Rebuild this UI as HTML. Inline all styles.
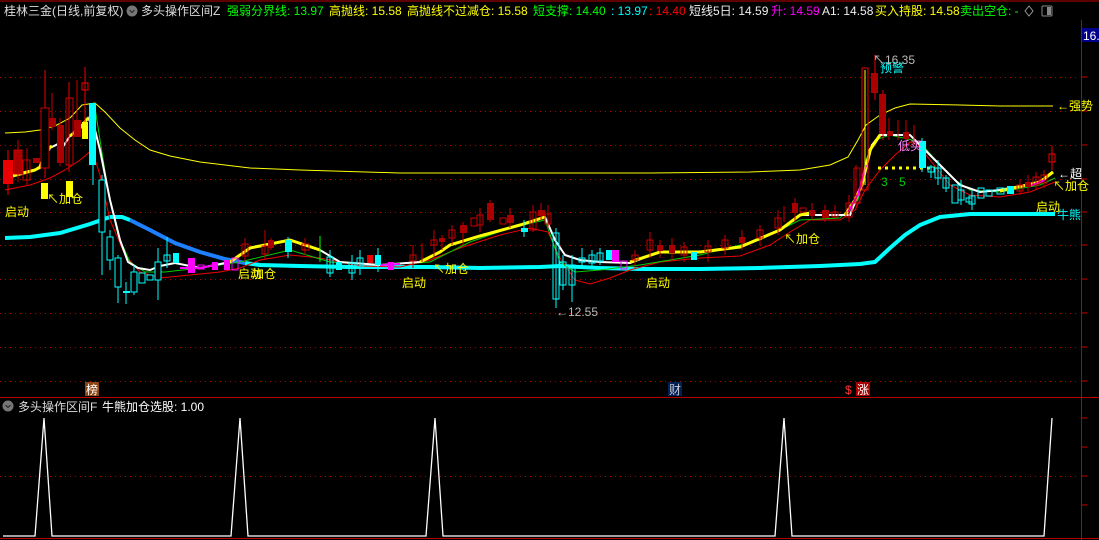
<!DOCTYPE html>
<html><head><meta charset="utf-8"><style>
html,body{margin:0;padding:0;background:#000;width:1099px;height:540px;overflow:hidden}
svg{display:block}
text{font-family:"Liberation Sans","Noto Sans CJK SC",sans-serif;font-size:12px}
</style></head><body>
<svg width="1099" height="540" viewBox="0 0 1099 540" xmlns="http://www.w3.org/2000/svg">
<rect width="1099" height="540" fill="#000"/>
<!-- frame -->
<line x1="0" y1="1" x2="1099" y2="1" stroke="#b00" stroke-width="1"/>
<line x1="1081.5" y1="20" x2="1081.5" y2="540" stroke="#b00"/>
<line x1="0" y1="397.5" x2="1099" y2="397.5" stroke="#b00"/>
<line x1="0" y1="538.5" x2="1099" y2="538.5" stroke="#b00"/>
<rect x="1082" y="28" width="17" height="14" fill="#00008b"/>
<text x="1083" y="40" fill="#fff">16.</text>
<!-- grid -->
<g stroke="#a00" stroke-dasharray="1,4" stroke-width="1">
<line x1="0" y1="77.5" x2="1080" y2="77.5"/><line x1="0" y1="111.5" x2="1080" y2="111.5"/>
<line x1="0" y1="145.5" x2="1080" y2="145.5"/><line x1="0" y1="179.5" x2="1080" y2="179.5"/>
<line x1="0" y1="212.5" x2="1080" y2="212.5"/><line x1="0" y1="245.5" x2="1080" y2="245.5"/>
<line x1="0" y1="279.5" x2="1080" y2="279.5"/><line x1="0" y1="313.5" x2="1080" y2="313.5"/>
<line x1="0" y1="347.5" x2="1080" y2="347.5"/><line x1="0" y1="381.5" x2="1080" y2="381.5"/>
<line x1="0" y1="476.5" x2="1080" y2="476.5"/>
</g>
<g stroke="#c00">
<line x1="1082" y1="77" x2="1087" y2="77"/><line x1="1082" y1="111" x2="1087" y2="111"/><line x1="1082" y1="145" x2="1087" y2="145"/><line x1="1082" y1="179" x2="1087" y2="179"/><line x1="1082" y1="212" x2="1087" y2="212"/><line x1="1082" y1="245" x2="1087" y2="245"/><line x1="1082" y1="279" x2="1087" y2="279"/><line x1="1082" y1="313" x2="1087" y2="313"/><line x1="1082" y1="347" x2="1087" y2="347"/><line x1="1082" y1="381" x2="1087" y2="381"/>
<line x1="1082" y1="418" x2="1087" y2="418"/><line x1="1082" y1="447" x2="1087" y2="447"/><line x1="1082" y1="476" x2="1087" y2="476"/><line x1="1082" y1="505" x2="1087" y2="505"/>
</g>
<!-- header -->
<text x="4" y="15" fill="#ddd">桂林三金(日线,前复权)</text>
<circle cx="132" cy="11" r="5.5" fill="#777"/><path d="M129.5 10 L132 12.5 L134.5 10" stroke="#222" fill="none"/>
<text x="141" y="15" fill="#ddd">多头操作区间Z</text>
<text x="227" y="15" fill="#0f0">强弱分界线: 13.97</text>
<text x="329" y="15" fill="#ff0">高抛线: 15.58</text>
<text x="407" y="15" fill="#ff0">高抛线不过减仓: 15.58</text>
<text x="533" y="15" fill="#0f0">短支撑: 14.40</text>
<text x="611" y="15" fill="#0ff">: 13.97</text>
<text x="649" y="15" fill="#f00">: 14.40</text>
<text x="689" y="15" fill="#eee">短线5日: 14.59</text>
<text x="771" y="15" fill="#f0f">升: 14.59</text>
<text x="822" y="15" fill="#eee">A1: 14.58</text>
<text x="875" y="15" fill="#ff0">买入持股: 14.58</text>
<text x="960" y="15" fill="#0f0">卖出空仓: -</text>
<path d="M1029 6 L1033 11 L1029 16 L1025 11 Z" stroke="#999" fill="none"/>
<rect x="1042" y="6" width="10" height="10" rx="1" stroke="#888" fill="none"/><rect x="1047" y="7" width="4" height="8" fill="#888"/>

<!-- upper yellow line -->
<polyline fill="none" stroke="#ff0" stroke-width="1" points="5,133 25,132 40,130 55,126 70,118 82,105 95,103 105,112 120,128 135,140 150,150 170,156 200,162 250,168 300,170 400,173 550,173 650,173 750,172 800,170 830,165 848,157 858,140 866,125 880,115 895,108 910,104 960,105 1000,106 1053,106"/>
<!-- cyan/blue bull-bear thick line -->
<polyline fill="none" stroke="#0ff" stroke-width="4" points="5,238 30,237 60,233 90,224 110,217 122,217 130,220"/>
<polyline fill="none" stroke="#1e7fff" stroke-width="4" points="130,220 150,230 175,243 200,252 225,259 245,263"/>
<polyline fill="none" stroke="#0ff" stroke-width="4" points="245,263 260,265 300,266 350,267 430,267 480,268 540,267 560,266 600,268 640,269 700,269 760,268 820,266 860,264 875,262 890,248 905,235 920,225 940,217 970,214 1000,214 1055,214"/>
<!-- red lower line -->
<polyline fill="none" stroke="#e00" stroke-width="1" points="5,190 30,185 50,178 65,170 80,160 92,150 100,175 110,220 125,255 140,272 160,278 190,275 220,272 240,268 260,260 290,255 320,258 360,266 400,267 430,260 460,248 500,235 530,228 548,232 560,258 575,280 590,284 610,278 630,270 660,262 700,258 740,256 770,245 790,232 810,220 840,220 855,210 865,190 880,170 895,155 910,142 918,145 930,160 950,185 970,195 1000,197 1030,192 1055,182"/>
<!-- green line -->
<polyline fill="none" stroke="#0c0" stroke-width="1" points="95,108 100,140 108,190 118,235 130,262 145,272 165,272 200,268 240,262 290,250 330,262 380,265 430,262 470,242 510,228 545,220 552,240 560,262 575,272 600,270 640,265 700,255 760,240 800,220 840,218 858,200 866,160 875,140 890,135 912,140 925,148 940,165 955,180 970,190 1000,192 1040,185 1055,178"/>
<!-- price line white -->
<polyline fill="none" stroke="#fff" stroke-width="2" points="5,177 20,173 35,170 40,168 50,148 58,144 62,148 70,136 80,128 88,118 95,130 100,150 110,200 120,240 128,262 138,268 150,270 160,266 175,263 200,268 230,262 250,248 290,240 320,250 340,262 380,265 420,262 440,252 450,245 480,236 520,225 545,217 555,240 565,255 580,260 600,262 630,263 660,252 700,252 740,247 780,230 800,215 850,215 862,185 872,145 880,135 910,135 925,150 945,170 960,185 980,192 1000,190 1040,182 1053,172"/>
<!-- yellow highlighted price segments -->
<g fill="none" stroke="#ff0" stroke-width="3">
<polyline points="5,178 20,174 35,170 40,167 46,150 52,146"/>
<polyline points="70,136 80,128 88,118"/>
<polyline points="230,262 250,248 290,240 320,250"/>
<polyline points="420,262 440,252 450,245 480,236 520,225 545,217"/>
<polyline points="630,262 660,252 700,252 740,247 780,230 800,215 810,213"/>
<polyline points="845,215 855,200 862,185 870,150 880,135"/>
<polyline points="1000,191 1040,182 1053,172"/>
</g>
<g fill="none" stroke="#f0f" stroke-width="2">
<polyline points="180,268 200,268 215,265"/><polyline points="380,265 400,264"/><polyline points="848,212 858,195 866,165"/><polyline points="1030,186 1045,180"/>
</g>
<!-- yellow dotted level -->
<line x1="878" y1="168" x2="935" y2="168" stroke="#ff0" stroke-width="3" stroke-dasharray="3,4"/>

<!-- candles -->
<g stroke-width="1">
<!-- left -->
<line x1="8" y1="150" x2="8" y2="195" stroke="#f00"/><rect x="3" y="160" width="10" height="24" fill="#e00"/>
<line x1="18" y1="140" x2="18" y2="182" stroke="#c00"/><rect x="14" y="150" width="8" height="24" fill="#a00" stroke="#c00"/>
<line x1="27" y1="148" x2="27" y2="185" stroke="#c00"/><rect x="23" y="160" width="7" height="20" fill="none" stroke="#c00"/>
<rect x="33" y="158" width="7" height="5" fill="#a00"/>
<line x1="45" y1="70" x2="45" y2="178" stroke="#e00"/><rect x="41" y="108" width="8" height="60" fill="#000" stroke="#c00"/>
<line x1="52" y1="93" x2="52" y2="130" stroke="#c00"/><rect x="49" y="118" width="7" height="9" fill="#a00"/>
<line x1="60" y1="118" x2="60" y2="166" stroke="#c00"/><rect x="57" y="125" width="7" height="38" fill="#a00"/>
<line x1="69" y1="82" x2="69" y2="172" stroke="#e00"/><rect x="66" y="98" width="7" height="67" fill="none" stroke="#c00"/>
<line x1="77" y1="80" x2="77" y2="137" stroke="#c00"/><rect x="74" y="120" width="7" height="17" fill="#a00"/>
<line x1="85" y1="67" x2="85" y2="130" stroke="#e00"/><rect x="82" y="83" width="6" height="7" fill="none" stroke="#e00"/>
<rect x="82" y="122" width="6" height="17" fill="#ff0"/>
<line x1="93" y1="103" x2="93" y2="185" stroke="#0ff"/><rect x="89" y="103" width="7" height="62" fill="#0ff"/>
<rect x="41" y="183" width="7" height="16" fill="#ff0"/><rect x="66" y="181" width="7" height="16" fill="#ff0"/>
<!-- drop cyan -->
<line x1="102" y1="175" x2="102" y2="275" stroke="#0ff"/><rect x="99" y="180" width="6" height="52" fill="#000" stroke="#0ff"/>
<line x1="110" y1="230" x2="110" y2="270" stroke="#0ff"/><rect x="107" y="237" width="6" height="23" fill="#000" stroke="#0ff"/>
<line x1="118" y1="255" x2="118" y2="303" stroke="#0ff"/><rect x="115" y="258" width="6" height="29" fill="#000" stroke="#0ff"/>
<line x1="126" y1="282" x2="126" y2="304" stroke="#0ff"/><rect x="123" y="291" width="7" height="2" fill="#0ff"/>
<line x1="134" y1="265" x2="134" y2="295" stroke="#0ff"/><rect x="131" y="272" width="6" height="20" fill="#000" stroke="#0ff"/>
<rect x="139" y="273" width="6" height="10" fill="#000" stroke="#0ff"/>
<rect x="147" y="275" width="6" height="5" fill="#000" stroke="#0ff"/>
<line x1="158" y1="248" x2="158" y2="300" stroke="#0ff"/><rect x="155" y="262" width="6" height="18" fill="#000" stroke="#0ff"/>
<rect x="164" y="255" width="6" height="6" fill="#000" stroke="#0ff"/><line x1="167" y1="237" x2="167" y2="268" stroke="#0ff"/>
<rect x="173" y="253" width="6" height="10" fill="#0ff"/>
<rect x="188" y="258" width="7" height="15" fill="#f0f"/>
<rect x="198" y="265" width="6" height="4" fill="none" stroke="#f0f"/>
<rect x="212" y="262" width="6" height="8" fill="#f0f"/>
<rect x="224" y="260" width="6" height="10" fill="#f0f"/>
<rect x="232" y="258" width="6" height="12" fill="none" stroke="#f0f"/>
<line x1="245" y1="238" x2="245" y2="262" stroke="#c00"/><rect x="242" y="244" width="6" height="12" fill="none" stroke="#c00"/>
<line x1="265" y1="230" x2="265" y2="260" stroke="#c00"/><rect x="262" y="246" width="6" height="8" fill="none" stroke="#c00"/>
<line x1="271" y1="238" x2="271" y2="250" stroke="#c00"/><rect x="268" y="240" width="6" height="8" fill="#a00"/>
<line x1="288" y1="237" x2="288" y2="258" stroke="#0ff"/><rect x="285" y="240" width="7" height="12" fill="#0ff"/>
<line x1="305" y1="238" x2="305" y2="255" stroke="#c00"/><rect x="302" y="244" width="7" height="6" fill="none" stroke="#c00"/>
<line x1="320" y1="236" x2="320" y2="262" stroke="#0f0"/>
<line x1="330" y1="250" x2="330" y2="277" stroke="#0ff"/><rect x="327" y="257" width="6" height="16" fill="none" stroke="#0ff"/>
<rect x="336" y="262" width="6" height="8" fill="#0ff"/>
<line x1="352" y1="255" x2="352" y2="280" stroke="#0ff"/><rect x="349" y="263" width="6" height="10" fill="none" stroke="#0ff"/>
<line x1="360" y1="250" x2="360" y2="275" stroke="#0ff"/><rect x="357" y="258" width="6" height="10" fill="none" stroke="#0ff"/>
<rect x="367" y="255" width="6" height="8" fill="#e00"/>
<line x1="378" y1="248" x2="378" y2="272" stroke="#0ff"/><rect x="375" y="255" width="6" height="10" fill="#0ff"/>
<rect x="388" y="262" width="6" height="8" fill="#f0f"/>
<line x1="413" y1="245" x2="413" y2="268" stroke="#c00"/><rect x="410" y="255" width="6" height="6" fill="none" stroke="#c00"/>
<line x1="422" y1="243" x2="422" y2="262" stroke="#c00"/>
<line x1="434" y1="230" x2="434" y2="258" stroke="#c00"/><rect x="431" y="240" width="6" height="5" fill="none" stroke="#c00"/>
<line x1="442" y1="235" x2="442" y2="250" stroke="#c00"/><rect x="439" y="238" width="6" height="4" fill="#a00"/>
<line x1="452" y1="225" x2="452" y2="245" stroke="#c00"/><rect x="449" y="230" width="6" height="8" fill="none" stroke="#c00"/>
<line x1="463" y1="222" x2="463" y2="245" stroke="#c00"/><rect x="460" y="225" width="7" height="8" fill="#a00"/>
<rect x="471" y="218" width="6" height="8" fill="none" stroke="#c00"/>
<line x1="480" y1="208" x2="480" y2="232" stroke="#c00"/><rect x="477" y="215" width="6" height="10" fill="none" stroke="#c00"/>
<line x1="490" y1="200" x2="490" y2="222" stroke="#c00"/><rect x="487" y="203" width="7" height="17" fill="#a00"/>
<rect x="500" y="218" width="6" height="6" fill="none" stroke="#c00"/>
<line x1="510" y1="208" x2="510" y2="228" stroke="#c00"/><rect x="507" y="215" width="7" height="8" fill="#a00"/>
<line x1="524" y1="220" x2="524" y2="237" stroke="#0ff"/><rect x="521" y="228" width="7" height="4" fill="#0ff"/>
<line x1="533" y1="205" x2="533" y2="232" stroke="#c00"/><rect x="530" y="212" width="6" height="18" fill="none" stroke="#c00"/>
<line x1="541" y1="203" x2="541" y2="220" stroke="#c00"/><rect x="538" y="210" width="7" height="6" fill="#a00"/>
<line x1="548" y1="205" x2="548" y2="228" stroke="#c00"/><rect x="545" y="214" width="6" height="10" fill="none" stroke="#c00"/>
<line x1="556" y1="228" x2="556" y2="308" stroke="#0ff"/><rect x="553" y="233" width="6" height="66" fill="none" stroke="#0ff"/>
<line x1="563" y1="255" x2="563" y2="290" stroke="#0ff"/><rect x="560" y="262" width="6" height="23" fill="none" stroke="#0ff"/>
<line x1="572" y1="255" x2="572" y2="302" stroke="#0ff"/><rect x="569" y="265" width="6" height="20" fill="none" stroke="#0ff"/>
<line x1="582" y1="248" x2="582" y2="268" stroke="#0ff"/><rect x="579" y="258" width="6" height="4" fill="none" stroke="#0ff"/>
<line x1="592" y1="250" x2="592" y2="268" stroke="#0ff"/><rect x="589" y="255" width="6" height="8" fill="none" stroke="#0ff"/>
<line x1="600" y1="248" x2="600" y2="265" stroke="#0ff"/><rect x="597" y="253" width="6" height="8" fill="none" stroke="#0ff"/>
<rect x="606" y="250" width="6" height="10" fill="#0ff"/>
<rect x="612" y="250" width="7" height="12" fill="#f0f"/>
<rect x="621" y="261" width="6" height="8" fill="none" stroke="#f0f"/>
<line x1="635" y1="250" x2="635" y2="268" stroke="#c00"/><rect x="632" y="255" width="6" height="5" fill="none" stroke="#c00"/>
<line x1="650" y1="232" x2="650" y2="258" stroke="#c00"/><rect x="647" y="240" width="6" height="10" fill="none" stroke="#c00"/>
<line x1="660" y1="240" x2="660" y2="258" stroke="#c00"/><rect x="657" y="245" width="6" height="6" fill="#a00"/>
<line x1="672" y1="238" x2="672" y2="260" stroke="#c00"/><rect x="669" y="245" width="6" height="8" fill="#a00"/>
<line x1="684" y1="242" x2="684" y2="262" stroke="#c00"/><rect x="681" y="247" width="6" height="8" fill="none" stroke="#c00"/>
<rect x="691" y="252" width="6" height="8" fill="#0ff"/>
<line x1="708" y1="240" x2="708" y2="262" stroke="#c00"/><rect x="705" y="246" width="6" height="6" fill="none" stroke="#c00"/>
<line x1="725" y1="235" x2="725" y2="255" stroke="#c00"/><rect x="722" y="240" width="6" height="8" fill="none" stroke="#c00"/>
<line x1="742" y1="230" x2="742" y2="250" stroke="#c00"/><rect x="739" y="237" width="6" height="6" fill="#a00"/>
<line x1="760" y1="225" x2="760" y2="245" stroke="#c00"/><rect x="757" y="230" width="6" height="8" fill="none" stroke="#c00"/>
<line x1="778" y1="210" x2="778" y2="235" stroke="#c00"/><rect x="775" y="218" width="6" height="10" fill="none" stroke="#c00"/>
<line x1="784" y1="206" x2="784" y2="222" stroke="#c00"/>
<line x1="795" y1="198" x2="795" y2="222" stroke="#c00"/><rect x="792" y="203" width="6" height="10" fill="#a00"/>
<rect x="800" y="208" width="6" height="4" fill="none" stroke="#c00"/>
<line x1="812" y1="203" x2="812" y2="220" stroke="#c00"/><rect x="809" y="210" width="6" height="6" fill="#a00"/>
<line x1="825" y1="205" x2="825" y2="222" stroke="#c00"/><rect x="822" y="210" width="7" height="8" fill="#a00"/>
<line x1="835" y1="205" x2="835" y2="218" stroke="#c00"/><rect x="832" y="212" width="6" height="5" fill="none" stroke="#c00"/>
<line x1="849" y1="195" x2="849" y2="222" stroke="#c00"/><rect x="846" y="203" width="6" height="14" fill="none" stroke="#c00"/>
<line x1="856" y1="165" x2="856" y2="210" stroke="#c00"/><rect x="854" y="168" width="6" height="35" fill="none" stroke="#c00"/>
<rect x="862" y="68" width="6" height="122" fill="none" stroke="#e00"/><line x1="865" y1="70" x2="865" y2="185" stroke="#ff0"/>
<line x1="875" y1="55" x2="875" y2="100" stroke="#e00"/><rect x="871" y="73" width="7" height="20" fill="#a00"/>
<line x1="883" y1="90" x2="883" y2="140" stroke="#e00"/><rect x="879" y="94" width="7" height="40" fill="#a00"/>
<line x1="889" y1="118" x2="889" y2="140" stroke="#c00"/><rect x="887" y="131" width="6" height="5" fill="#a00"/>
<line x1="898" y1="120" x2="898" y2="140" stroke="#c00"/>
<line x1="906" y1="120" x2="906" y2="140" stroke="#c00"/><rect x="903" y="132" width="6" height="7" fill="#a00"/>
<line x1="914" y1="125" x2="914" y2="145" stroke="#c00"/>
<line x1="922" y1="138" x2="922" y2="172" stroke="#0ff"/><rect x="919" y="141" width="7" height="27" fill="#0ff"/>
<line x1="931" y1="165" x2="931" y2="178" stroke="#0ff"/><rect x="928" y="167" width="6" height="5" fill="none" stroke="#0ff"/>
<line x1="938" y1="160" x2="938" y2="185" stroke="#0ff"/><rect x="935" y="168" width="6" height="10" fill="none" stroke="#0ff"/>
<line x1="946" y1="175" x2="946" y2="192" stroke="#0ff"/><rect x="943" y="178" width="6" height="10" fill="none" stroke="#0ff"/>
<rect x="952" y="185" width="6" height="18" fill="none" stroke="#0ff"/>
<line x1="961" y1="180" x2="961" y2="205" stroke="#0ff"/><rect x="958" y="190" width="6" height="10" fill="none" stroke="#0ff"/>
<rect x="966" y="198" width="6" height="4" fill="none" stroke="#0ff"/>
<line x1="972" y1="190" x2="972" y2="210" stroke="#0ff"/><rect x="969" y="196" width="6" height="8" fill="none" stroke="#0ff"/>
<rect x="978" y="188" width="6" height="10" fill="none" stroke="#0ff"/>
<rect x="986" y="190" width="6" height="6" fill="none" stroke="#0ff"/>
<rect x="997" y="188" width="7" height="6" fill="none" stroke="#0ff"/>
<rect x="1007" y="186" width="7" height="8" fill="#0ff"/>
<line x1="1020" y1="180" x2="1020" y2="195" stroke="#c00"/><rect x="1017" y="185" width="6" height="6" fill="none" stroke="#c00"/>
<line x1="1028" y1="175" x2="1028" y2="192" stroke="#c00"/><rect x="1025" y="182" width="6" height="5" fill="#a00"/>
<line x1="1036" y1="172" x2="1036" y2="190" stroke="#c00"/><rect x="1033" y="177" width="6" height="8" fill="none" stroke="#c00"/>
<line x1="1044" y1="170" x2="1044" y2="188" stroke="#c00"/><rect x="1041" y="175" width="6" height="8" fill="none" stroke="#c00"/>
<line x1="1052" y1="146" x2="1052" y2="170" stroke="#e00"/><rect x="1049" y="154" width="6" height="8" fill="none" stroke="#e00"/>
</g>

<!-- labels -->
<g fill="#ff0">
<text x="5" y="216">启动</text>
<text x="47" y="203">↖加仓</text>
<text x="238" y="278">启动</text><text x="252" y="278">加仓</text>
<text x="402" y="287">启动</text>
<text x="433" y="273">↖加仓</text>
<text x="646" y="287">启动</text>
<text x="784" y="243">↖加仓</text>
<text x="1036" y="211">启动</text>
<text x="1053" y="190">↖加仓</text>
<text x="1057" y="110">←强势</text>
</g>
<text x="1058" y="178" fill="#fff">←超</text>
<text x="1057" y="219" fill="#0ff">牛熊</text>
<text x="880" y="72" fill="#0ff">预警</text>
<text x="873" y="64" fill="#bbb">↖16.35</text>
<text x="898" y="150" fill="#f8f">低买</text>
<text x="881" y="186" fill="#0c0">3</text><text x="899" y="186" fill="#0c0">5</text>
<text x="556" y="316" fill="#bbb">←12.55</text>

<!-- markers row -->
<rect x="85" y="382" width="14" height="14" fill="#8b4513"/><text x="86" y="394" fill="#fff">榜</text>
<rect x="668" y="382" width="14" height="14" fill="#00205a"/><text x="669" y="394" fill="#ccc">财</text>
<text x="845" y="394" fill="#f33">$</text>
<rect x="856" y="382" width="14" height="14" fill="#a00"/><text x="857" y="394" fill="#fff">涨</text>

<!-- bottom panel -->
<circle cx="8" cy="406" r="5.5" fill="#777"/><path d="M5.5 405 L8 407.5 L10.5 405" stroke="#222" fill="none"/>
<text x="18" y="411" fill="#ddd">多头操作区间F</text>
<text x="102" y="411" fill="#fff">牛熊加仓选股: 1.00</text>
<polyline fill="none" stroke="#fff" stroke-width="1.3" points="3,536 35,536 44,418 52,536 231,536 240,418 248,536 426,536 435,418 443,536 775,536 784,418 792,536 1044,536 1052,418"/>
</svg>
</body></html>
